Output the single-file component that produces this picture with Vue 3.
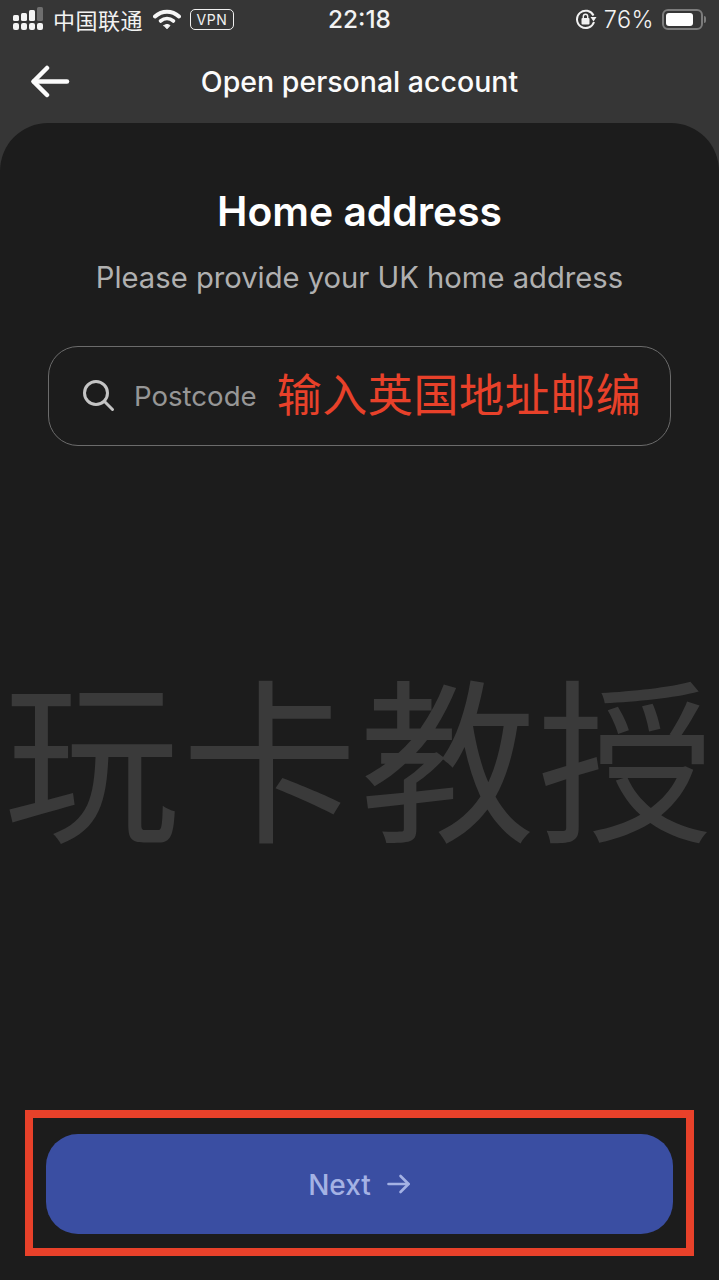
<template>
  <div class="page">
    <header class="top">
      <div class="status">
        <div class="status-left">
          <svg class="signal" width="33" height="24" viewBox="0 0 33 24" fill="#f4f4f4">
            <rect x="1" y="8" width="6" height="6" rx="1.5" />
            <rect x="1" y="16" width="6" height="7" rx="2" />
            <rect x="9" y="6" width="6" height="8" rx="1.5" />
            <rect x="9" y="16" width="6" height="7" rx="2" />
            <rect x="17" y="3" width="6" height="11" rx="1.5" />
            <rect x="17" y="16" width="6" height="7" rx="2" />
            <rect x="25" y="0" width="6" height="14" rx="1.5" fill="#6e6e6e" />
            <rect x="25" y="16" width="6" height="7" rx="2" />
          </svg>
          <span class="carrier">中国联通</span>
          <svg class="wifi" width="28" height="22" viewBox="0 0 28 22" fill="none" stroke="#f6f6f6" stroke-linecap="round">
            <path d="M2 8.500C9 2 19 2 26 8.500" stroke-width="4" />
            <path d="M7.500 13C11.500 9.800 16.500 9.800 20.500 13" stroke-width="3.600" />
            <path d="M11 17.500 14 20.800 17 17.500C15 16 13 16 11 17.500Z" fill="#f6f6f6" stroke-width="1" />
          </svg>
          <span class="vpn">VPN</span>
        </div>
        <span class="time">22:18</span>
        <div class="status-right">
          <svg width="22" height="22" viewBox="0 0 22 22" fill="none">
            <path d="M18.500 7.500A8.700 8.700 0 1 0 19 14" stroke="#f2f2f2" stroke-width="2" />
            <path d="M15.500 9h6l-3 4.500z" fill="#f2f2f2" />
            <rect x="6.500" y="10" width="8" height="6.500" rx="1" fill="#f2f2f2" />
            <path d="M8.300 10V8.500a2.200 2.200 0 0 1 4.400 0V10" stroke="#f2f2f2" stroke-width="1.400" />
          </svg>
          <span class="battery-text">76%</span>
          <div class="battery"><div class="battery-fill"></div></div>
          <div class="battery-cap"></div>
        </div>
      </div>
      <div class="nav">
        <svg class="back" width="42" height="34" viewBox="0 0 42 34" fill="none" stroke="#fbfbfb" stroke-width="4.500" stroke-linecap="round" stroke-linejoin="round">
          <path d="M17 3 3.500 16.500 17 30" />
          <path d="M4 16.500h33" />
        </svg>
        <h1 class="nav-title">Open personal account</h1>
      </div>
    </header>
    <main class="sheet">
      <h2 class="title">Home address</h2>
      <p class="subtitle">Please provide your UK home address</p>
      <div class="field">
        <svg width="34" height="34" viewBox="0 0 34 34" fill="none" stroke="#c4c4c4" stroke-width="3" stroke-linecap="round">
          <circle cx="14" cy="14" r="11.500" />
          <path d="m22.500 22.500 8 8" />
        </svg>
        <span class="placeholder">Postcode</span>
        <span class="note">输入英国地址邮编</span>
      </div>
      <div class="watermark">玩卡教授</div>
      <div class="action">
        <button class="next" type="button">
          <span class="next-label">Next</span>
          <svg width="24" height="22" viewBox="0 0 24 22" fill="none" stroke="#a4b2e4" stroke-width="2.600" stroke-linecap="round" stroke-linejoin="round">
            <path d="M1.500 11h20" />
            <path d="m13.500 3 8 8-8 8" />
          </svg>
        </button>
      </div>
    </main>
  </div>
</template>

<script setup>
</script>

<style>
html,
body {
  margin: 0;
  background: #1c1c1c;
}
</style>

<style scoped>
.page {
  position: relative;
  width: 719px;
  height: 1280px;
  overflow: hidden;
  display: flex;
  flex-direction: column;
  background: #363636;
  font-family: Inter, "Noto Sans CJK SC", sans-serif;
}
.top {
  height: 123px;
  flex: none;
}
.status {
  height: 38px;
  padding: 0 13px 0 12px;
  display: flex;
  align-items: center;
  justify-content: space-between;
  position: relative;
  color: #f2f2f2;
}
.status-left,
.status-right {
  display: flex;
  align-items: center;
}
.carrier {
  margin-left: 8px;
  font-size: 22px;
  font-family: "Noto Sans CJK SC", sans-serif;
  letter-spacing: 0.5px;
  line-height: 38px;
}
.wifi {
  margin-left: 10px;
}
.vpn {
  margin-left: 9px;
  width: 44px;
  height: 21px;
  border: 1.500px solid #f0f0f0;
  border-radius: 5px;
  box-sizing: border-box;
  display: flex;
  align-items: center;
  justify-content: center;
  font-size: 14px;
  letter-spacing: 0.6px;
}
.time {
  position: absolute;
  left: 0;
  right: 0;
  text-align: center;
  font-size: 24.400px;
  font-weight: 500;
}
.battery-text {
  margin-left: 7px;
  margin-right: 8px;
  font-size: 23.500px;
  font-weight: 300;
  letter-spacing: 0.4px;
}
.battery {
  width: 41px;
  height: 21px;
  border: 2px solid #7c7c7c;
  border-radius: 6px;
  box-sizing: border-box;
  padding: 2px;
}
.battery-fill {
  width: 27px;
  height: 13px;
  background: #fff;
  border-radius: 3px;
}
.battery-cap {
  width: 2px;
  height: 7px;
  margin-left: 1px;
  background: #7c7c7c;
  border-radius: 0 2px 2px 0;
}
.nav {
  height: 85px;
  position: relative;
  display: flex;
  align-items: center;
  justify-content: center;
}
.back {
  position: absolute;
  left: 30px;
  top: 27px;
}
.nav-title {
  margin: 1px 0 0;
  font-size: 28.500px;
  font-weight: 500;
  color: #fbfbfb;
}
.sheet {
  flex: 1;
  position: relative;
  background: #1c1c1c;
  border-radius: 48px 48px 0 0;
  display: flex;
  flex-direction: column;
  align-items: center;
}
.title {
  margin: 62px 0 0;
  height: 52px;
  line-height: 52px;
  font-size: 40.800px;
  font-weight: 600;
  color: #fff;
}
.subtitle {
  margin: 23px 0 0;
  height: 36px;
  line-height: 36px;
  font-size: 29.200px;
  color: #b0b0b0;
}
.field {
  width: 623px;
  height: 100px;
  margin-top: 50px;
  box-sizing: border-box;
  border: 1px solid #6b6b6b;
  border-radius: 30px;
  padding: 0 0 0 33px;
  display: flex;
  align-items: center;
}
.placeholder {
  margin-left: 18px;
  font-size: 27.600px;
  color: #969696;
}
.note {
  margin-left: 20px;
  font-size: 45px;
  color: #e8412a;
  font-family: "Noto Sans CJK SC", sans-serif;
  white-space: nowrap;
  letter-spacing: 0.600px;
  margin-top: -7px;
}
.watermark {
  position: absolute;
  left: 0;
  right: 0;
  top: 530px;
  text-align: center;
  font-size: 176px;
  line-height: 200px;
  font-family: "Noto Sans CJK SC", sans-serif;
  font-weight: 400;
  color: #3a3a3a;
  white-space: nowrap;
  letter-spacing: 2px;
}
.action {
  margin-top: auto;
  margin-bottom: 24px;
  width: 669px;
  height: 146px;
  box-sizing: border-box;
  border: 8px solid #e8412a;
  padding: 16px 13px 14px 13px;
}
.next {
  width: 100%;
  height: 100%;
  border: none;
  border-radius: 32px;
  background: #3a4ea2;
  color: #a4b2e4;
  font-family: Inter, sans-serif;
  font-size: 28px;
  font-weight: 500;
  display: flex;
  align-items: center;
  justify-content: center;
  gap: 16px;
}
.next-label {
  margin-top: 2px;
}
</style>
